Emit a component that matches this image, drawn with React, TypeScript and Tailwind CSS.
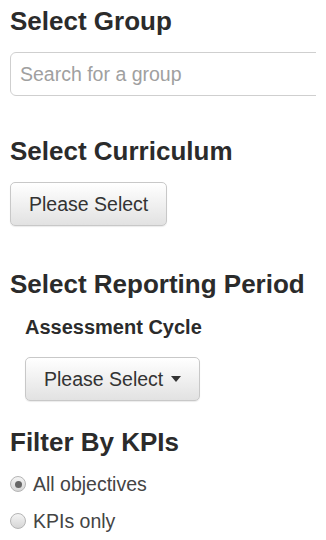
const FONT = "font-['Liberation_Sans',Arial,sans-serif]";

function Heading({ children }: { children: React.ReactNode }) {
  return (
    <h2 className="text-[26px] leading-[29px] font-bold text-[#2b2b2b]">{children}</h2>
  );
}

function SelectButton({ caret }: { caret?: boolean }) {
  return (
    <button
      type="button"
      className="flex h-[44px] items-center rounded-[5px] border border-[#c8c8c8] bg-gradient-to-b from-white to-[#e2e2e2] px-[18px] text-[19.5px] leading-[22px] text-[#333] shadow-[0_1px_1px_rgba(0,0,0,0.08)]"
    >
      Please Select
      {caret && (
        <span className="ml-[8px] inline-block h-0 w-0 border-x-[5.5px] border-t-[6px] border-x-transparent border-t-[#333]" />
      )}
    </button>
  );
}

function Radio({ label, checked }: { label: string; checked?: boolean }) {
  return (
    <label className="flex h-[22px] items-center">
      <span className="flex h-[16px] w-[16px] items-center justify-center rounded-full border border-[#b5b5b5] bg-gradient-to-b from-[#f4f4f4] to-[#d6d6d6]">
        {checked && <span className="h-[7px] w-[7px] rounded-full bg-[#666]" />}
      </span>
      <span className="ml-[7px] text-[19.5px] leading-[22px] text-[#444]">{label}</span>
    </label>
  );
}

export default function App() {
  return (
    <div className={`${FONT} h-[540px] w-[326px] bg-white pl-[10px] pt-[7px]`}>
      <Heading>Select Group</Heading>
      <div className="mt-[16px] w-[306px] overflow-hidden">
        <input
          type="text"
          placeholder="Search for a group"
          className="h-[44px] w-[330px] rounded-[6px] border border-[#cfcfcf] px-[9px] text-[19.5px] text-[#555] placeholder:text-[#a0a0a0] outline-none"
        />
      </div>

      <div className="mt-[41px]">
        <Heading>Select Curriculum</Heading>
      </div>
      <div className="mt-[16px]">
        <SelectButton />
      </div>

      <div className="mt-[44px]">
        <Heading>Select Reporting Period</Heading>
      </div>
      <div className="pl-[15px]">
        <h3 className="mt-[17px] text-[20px] leading-[23px] font-bold text-[#2b2b2b]">
          Assessment Cycle
        </h3>
        <div className="mt-[18px]">
          <SelectButton caret />
        </div>
      </div>

      <div className="mt-[27px]">
        <Heading>Filter By KPIs</Heading>
      </div>
      <div className="mt-[16px] flex flex-col gap-[15px]">
        <Radio label="All objectives" checked />
        <Radio label="KPIs only" />
      </div>
    </div>
  );
}
